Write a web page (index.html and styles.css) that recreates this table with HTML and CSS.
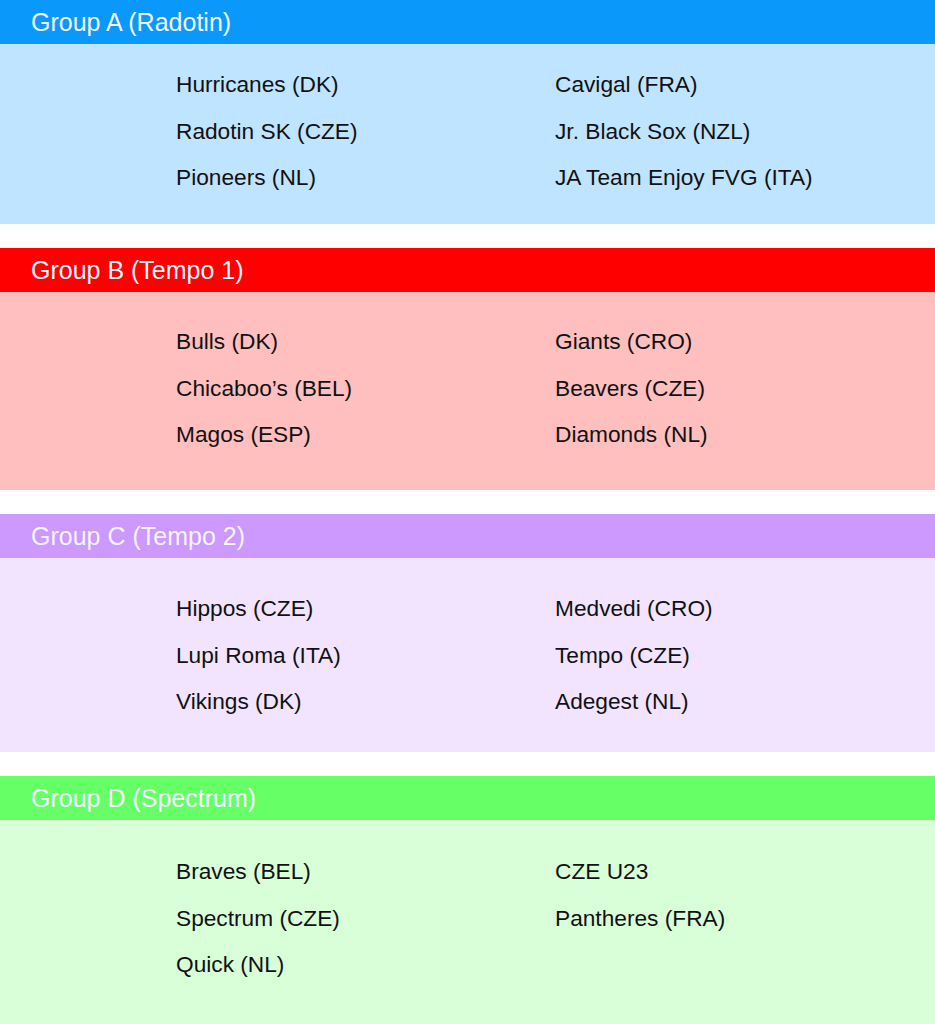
FILE: index.html
```html
<!DOCTYPE html>
<html lang="en">
<head>
<meta charset="utf-8">
<title>Groups</title>
<link rel="stylesheet" href="styles.css">
</head>
<body>
<section class="group group-a">
  <h2 class="group-title">Group A (Radotin)</h2>
  <div class="group-body">
    <ul class="col">
      <li>Hurricanes (DK)</li>
      <li>Radotin SK (CZE)</li>
      <li>Pioneers (NL)</li>
    </ul>
    <ul class="col">
      <li>Cavigal (FRA)</li>
      <li>Jr. Black Sox (NZL)</li>
      <li>JA Team Enjoy FVG (ITA)</li>
    </ul>
  </div>
</section>
<section class="group group-b">
  <h2 class="group-title">Group B (Tempo 1)</h2>
  <div class="group-body">
    <ul class="col">
      <li>Bulls (DK)</li>
      <li>Chicaboo’s (BEL)</li>
      <li>Magos (ESP)</li>
    </ul>
    <ul class="col">
      <li>Giants (CRO)</li>
      <li>Beavers (CZE)</li>
      <li>Diamonds (NL)</li>
    </ul>
  </div>
</section>
<section class="group group-c">
  <h2 class="group-title">Group C (Tempo 2)</h2>
  <div class="group-body">
    <ul class="col">
      <li>Hippos (CZE)</li>
      <li>Lupi Roma (ITA)</li>
      <li>Vikings (DK)</li>
    </ul>
    <ul class="col">
      <li>Medvedi (CRO)</li>
      <li>Tempo (CZE)</li>
      <li>Adegest (NL)</li>
    </ul>
  </div>
</section>
<section class="group group-d">
  <h2 class="group-title">Group D (Spectrum)</h2>
  <div class="group-body">
    <ul class="col">
      <li>Braves (BEL)</li>
      <li>Spectrum (CZE)</li>
      <li>Quick (NL)</li>
    </ul>
    <ul class="col">
      <li>CZE U23</li>
      <li>Pantheres (FRA)</li>
    </ul>
  </div>
</section>
</body>
</html>
```

FILE: styles.css
```css
html, body {
  margin: 0;
  padding: 0;
  background: #ffffff;
}
body {
  font-family: "Liberation Sans", Arial, sans-serif;
  color: #111111;
}
.group {
  display: flex;
  flex-direction: column;
}
.group + .group {
  margin-top: 24px;
}
.group-title {
  margin: 0;
  height: 44px;
  line-height: 45px;
  padding-left: 31px;
  font-size: 25px;
  font-weight: normal;
  color: #f4f4ff;
}
.group-body {
  display: grid;
  grid-template-columns: 379px 1fr;
  padding-left: 176px;
  box-sizing: border-box;
}
.col {
  list-style: none;
  margin: 0;
  padding: 0;
}
.col li {
  font-size: 22.7px;
  height: 46.6px;
  line-height: 46.6px;
}
.group-a .group-title { background: #0a99fa; }
.group-a .group-body { background: #bfe4ff; padding-top: 17px; padding-bottom: 23px; height: 180px; }
.group-b .group-title { background: #ff0000; }
.group-b .group-body { background: #ffbfbf; padding-top: 26px; padding-bottom: 32px; height: 198px; }
.group-c .group-title { background: #cc99ff; }
.group-c .group-body { background: #f2e4ff; padding-top: 27px; padding-bottom: 27px; height: 194px; }
.group-d .group-title { background: #66ff66; }
.group-d .group-body { background: #d9ffd9; padding-top: 28px; padding-bottom: 40px; height: 220px; }
```
